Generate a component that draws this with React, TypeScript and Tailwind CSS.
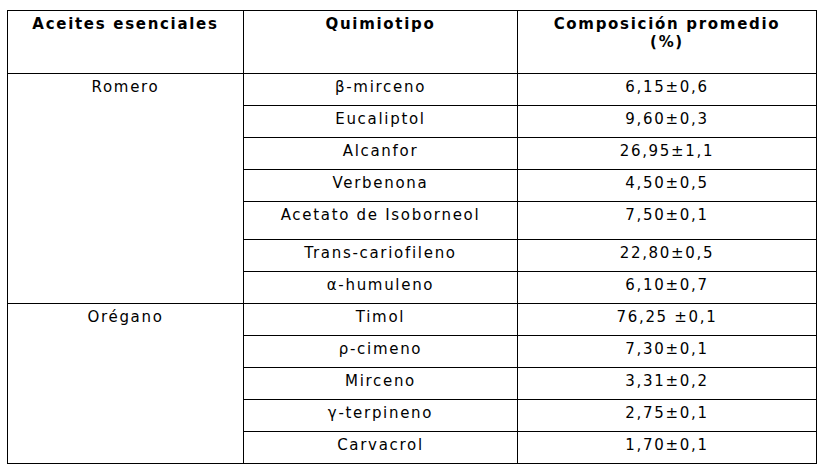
const romero = [
  ["β-mirceno", "6,15±0,6"],
  ["Eucaliptol", "9,60±0,3"],
  ["Alcanfor", "26,95±1,1"],
  ["Verbenona", "4,50±0,5"],
  ["Acetato de Isoborneol", "7,50±0,1"],
  ["Trans-cariofileno", "22,80±0,5"],
  ["α-humuleno", "6,10±0,7"],
]

const oregano = [
  ["Timol", "76,25 ±0,1"],
  ["ρ-cimeno", "7,30±0,1"],
  ["Mirceno", "3,31±0,2"],
  ["γ-terpineno", "2,75±0,1"],
  ["Carvacrol", "1,70±0,1"],
]

const cell = "border border-black px-2 pt-[4px] align-top text-center"

function Group({ name, rows }: { name: string; rows: string[][] }) {
  return (
    <>
      {rows.map((r, i) => (
        <tr key={r[0]} className={r[0] === "Acetato de Isoborneol" ? "h-[38px]" : "h-[32px]"}>
          {i === 0 && (
            <td rowSpan={rows.length} className={cell}>
              {name}
            </td>
          )}
          <td className={cell}>{r[0]}</td>
          <td className={cell}>{r[1]}</td>
        </tr>
      ))}
    </>
  )
}

export default function App() {
  return (
    <div className="min-h-screen bg-white pl-[7px] pt-[10px] font-['DejaVu_Sans',Verdana,sans-serif] text-[15px] leading-[18px] tracking-[1.7px] text-black">
      <table className="w-[809px] table-fixed border-collapse">
        <colgroup>
          <col className="w-[236px]" />
          <col className="w-[274px]" />
          <col className="w-[299px]" />
        </colgroup>
        <thead>
          <tr className="h-[63px]">
            <th className="border border-black px-2 pt-[4px] align-top text-center font-bold">
              Aceites esenciales
            </th>
            <th className="border border-black px-2 pt-[4px] align-top text-center font-bold">
              Quimiotipo
            </th>
            <th className="border border-black px-8 pt-[4px] align-top text-center font-bold">
              Composición promedio (%)
            </th>
          </tr>
        </thead>
        <tbody>
          <Group name="Romero" rows={romero} />
          <Group name="Orégano" rows={oregano} />
        </tbody>
      </table>
    </div>
  )
}
